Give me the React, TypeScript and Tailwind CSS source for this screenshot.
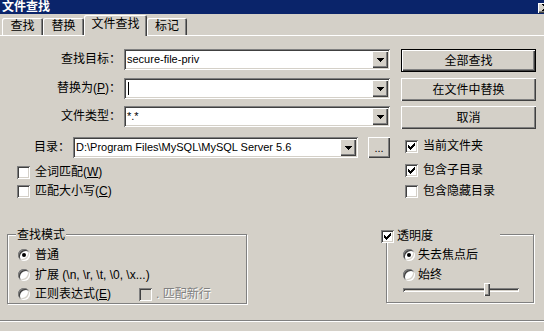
import type { ReactNode } from "react";

const sunken =
  "shadow-[inset_1px_1px_0_#808080,inset_-1px_-1px_0_#ffffff,inset_2px_2px_0_#404040,inset_-2px_-2px_0_#d4d0c8]";
const raised =
  "shadow-[inset_1px_1px_0_#ffffff,inset_-1px_-1px_0_#404040,inset_-2px_-2px_0_#808080]";
const etched = "border border-[#808080] shadow-[inset_1px_1px_0_#ffffff,1px_1px_0_#ffffff]";

function Arrow() {
  return (
    <svg width="7" height="4" viewBox="0 0 7 4" shapeRendering="crispEdges">
      <path d="M0 0h7v1H0z M1 1h5v1H1z M2 2h3v1H2z M3 3h1v1H3z" fill="#000" />
    </svg>
  );
}

function Combo({ w, children }: { w: string; children?: ReactNode }) {
  return (
    <div className={`${w} flex h-[21px] shrink-0 items-center bg-white p-[2px] ${sunken}`}>
      <div className="flex flex-1 items-center overflow-hidden whitespace-nowrap pl-[1px] font-['Liberation_Sans',sans-serif] text-[11px] leading-[17px]">
        {children}
      </div>
      <div className={`flex h-[17px] w-[16px] items-center justify-center bg-[#d4d0c8] ${raised}`}>
        <Arrow />
      </div>
    </div>
  );
}

function Check({ on, disabled }: { on?: boolean; disabled?: boolean }) {
  return (
    <div
      className={`flex h-[13px] w-[13px] shrink-0 items-center justify-center ${
        disabled ? "bg-[#d4d0c8]" : "bg-white"
      } ${sunken}`}
    >
      {on && (
        <svg width="7" height="7" viewBox="0 0 7 7" shapeRendering="crispEdges">
          <path
            d="M0 2h1v3H0z M1 3h1v3H1z M2 4h1v3H2z M3 3h1v3H3z M4 2h1v3H4z M5 1h1v3H5z M6 0h1v3H6z"
            fill="#000"
          />
        </svg>
      )}
    </div>
  );
}

function Radio({ on }: { on?: boolean }) {
  return (
    <div
      className={`flex h-[12px] w-[12px] shrink-0 items-center justify-center rounded-full bg-white ${sunken}`}
    >
      {on && <div className="h-[4px] w-[4px] rounded-full bg-black" />}
    </div>
  );
}

function Btn({ children, def }: { children: ReactNode; def?: boolean }) {
  if (def) {
    return (
      <div className="h-[23px] w-[135px] border border-black">
        <div className={`flex h-full w-full items-center justify-center ${raised}`}>{children}</div>
      </div>
    );
  }
  return (
    <div className={`flex h-[23px] w-[135px] items-center justify-center ${raised}`}>{children}</div>
  );
}

function Tab({ w, active, children }: { w: string; active?: boolean; children: ReactNode }) {
  return (
    <div
      className={`${w} flex items-center justify-center rounded-t-[2px] bg-[#d4d0c8] leading-[15px] shadow-[inset_1px_1px_0_#ffffff,inset_-1px_0_0_#404040,inset_-2px_0_0_#808080] ${
        active ? "relative z-10 -mb-px h-[21px] pb-[2px]" : "h-[17px]"
      }`}
    >
      {children}
    </div>
  );
}

function Label({ w, children }: { w: string; children: ReactNode }) {
  return <div className={`${w} shrink-0 text-right leading-[21px]`}>{children}</div>;
}

function CheckRow({ on, children }: { on?: boolean; children: ReactNode }) {
  return (
    <div className="flex h-[13px] items-center">
      <Check on={on} />
      <span className="ml-[5px] whitespace-nowrap leading-[13px]">{children}</span>
    </div>
  );
}

export default function App() {
  return (
    <div className="relative flex h-[331px] w-[544px] flex-col overflow-hidden bg-[#d4d0c8] font-['Liberation_Sans','Noto_Sans_CJK_SC',sans-serif] text-[12px] text-black">
      {/* title bar */}
      <div className="flex h-[14px] shrink-0 items-center bg-[#0a246a] pl-[2px]">
        <span className="flex-1 font-bold leading-[14px] text-white">文件查找</span>
        <div className={`-mr-[10px] mt-[1px] flex h-[10px] w-[16px] shrink-0 items-center justify-center bg-[#d4d0c8] ${raised}`}>
          <svg width="8" height="7" viewBox="0 0 8 7" shapeRendering="crispEdges">
            <path d="M0 0h2l6 7H6z M6 0h2L2 7H0z" fill="#000" />
          </svg>
        </div>
      </div>

      {/* tabs */}
      <div className="flex h-[21px] shrink-0 items-end pl-[2px]">
        <Tab w="w-[41px]">查找</Tab>
        <Tab w="w-[41px]">替换</Tab>
        <Tab w="w-[63px]" active>
          文件查找
        </Tab>
        <Tab w="w-[40px]">标记</Tab>
      </div>

      {/* page */}
      <div className="flex flex-1 flex-col border-t border-white">
        <div className="flex pt-[13px]">
          {/* left column */}
          <div className="flex w-[390px] flex-col">
            <div className="flex items-center">
              <Label w="w-[121px]">查找目标：</Label>
              <div className="ml-[3px]">
                <Combo w="w-[266px]">secure-file-priv</Combo>
              </div>
            </div>
            <div className="mt-[8px] flex items-center">
              <Label w="w-[121px]">
                替换为(<span className="underline">P</span>)：
              </Label>
              <div className="ml-[3px]">
                <Combo w="w-[266px]">
                  <div className="ml-[1px] h-[13px] w-px bg-black" />
                </Combo>
              </div>
            </div>
            <div className="mt-[7px] flex items-center">
              <Label w="w-[121px]">文件类型：</Label>
              <div className="ml-[3px]">
                <Combo w="w-[266px]">*.*</Combo>
              </div>
            </div>
            <div className="mt-[10px] flex items-center">
              <Label w="w-[70px]">目录：</Label>
              <div className="ml-[3px]">
                <Combo w="w-[285px]">D:\Program Files\MySQL\MySQL Server 5.6</Combo>
              </div>
              <div
                className={`ml-[10px] flex h-[21px] w-[22px] items-end justify-center pb-[4px] font-['Liberation_Sans',sans-serif] text-[11px] leading-[11px] ${raised}`}
              >
                ...
              </div>
            </div>
            <div className="ml-[17px] mt-[8px]">
              <CheckRow>
                全词匹配(<span className="underline">W</span>)
              </CheckRow>
            </div>
            <div className="ml-[17px] mt-[6px]">
              <CheckRow>
                匹配大小写(<span className="underline">C</span>)
              </CheckRow>
            </div>
          </div>

          {/* right column */}
          <div className="ml-[11px] flex w-[135px] flex-col">
            <Btn def>全部查找</Btn>
            <div className="mt-[6px]">
              <Btn>在文件中替换</Btn>
            </div>
            <div className="mt-[5px]">
              <Btn>取消</Btn>
            </div>
            <div className="ml-[4px] mt-[11px]">
              <CheckRow on>当前文件夹</CheckRow>
            </div>
            <div className="ml-[4px] mt-[11px]">
              <CheckRow on>包含子目录</CheckRow>
            </div>
            <div className="ml-[4px] mt-[8px]">
              <CheckRow>包含隐藏目录</CheckRow>
            </div>
          </div>
        </div>

        {/* group boxes */}
        <div className="mt-[36px] flex items-start">
          <div className={`relative ml-[7px] h-[70px] w-[240px] ${etched}`}>
            <span className="absolute left-[8px] top-[-7px] bg-[#d4d0c8] px-[1px] leading-[14px]">查找模式</span>
            <div className="flex flex-col pl-[10px] pt-[14px]">
              <div className="flex h-[12px] items-center">
                <Radio on />
                <span className="ml-[5px] leading-[12px]">普通</span>
              </div>
              <div className="mt-[8px] flex h-[12px] items-center">
                <Radio />
                <span className="ml-[5px] whitespace-nowrap leading-[12px]">扩展 (\n, \r, \t, \0, \x...)</span>
              </div>
              <div className="mt-[7px] flex h-[12px] items-center">
                <div className="flex w-[121px] items-center">
                  <Radio />
                  <span className="ml-[5px] whitespace-nowrap leading-[12px]">
                    正则表达式(<span className="underline">E</span>)
                  </span>
                </div>
                <Check disabled />
                <span className="ml-[4px] whitespace-nowrap leading-[12px] text-[#808080] [text-shadow:1px_1px_0_#ffffff]">
                  . 匹配新行
                </span>
              </div>
            </div>
          </div>

          <div className={`relative ml-[139px] h-[69px] w-[148px] ${etched}`}>
            <div className="absolute left-[-6px] top-[-5px] flex h-[13px] w-[119px] items-center bg-[#d4d0c8]">
              <Check on />
              <span className="ml-[3px] leading-[13px]">透明度</span>
            </div>
            <div className="flex flex-col pl-[16px] pt-[14px]">
              <div className="flex h-[12px] items-center">
                <Radio on />
                <span className="ml-[3px] leading-[12px]">失去焦点后</span>
              </div>
              <div className="mt-[8px] flex h-[12px] items-center">
                <Radio />
                <span className="ml-[3px] leading-[12px]">始终</span>
              </div>
              <div className="relative mt-[3px] h-[12px] w-[116px]">
                <div className={`absolute left-0 right-0 top-[4px] h-[4px] bg-[#d4d0c8] ${sunken}`} />
                <div className={`absolute left-[81px] top-[-1px] h-[13px] w-[6px] bg-[#d4d0c8] ${raised}`} />
              </div>
            </div>
          </div>
        </div>

        <div className="mt-[16px] h-[2px] border-t border-b border-t-[#808080] border-b-white" />
      </div>
    </div>
  );
}
